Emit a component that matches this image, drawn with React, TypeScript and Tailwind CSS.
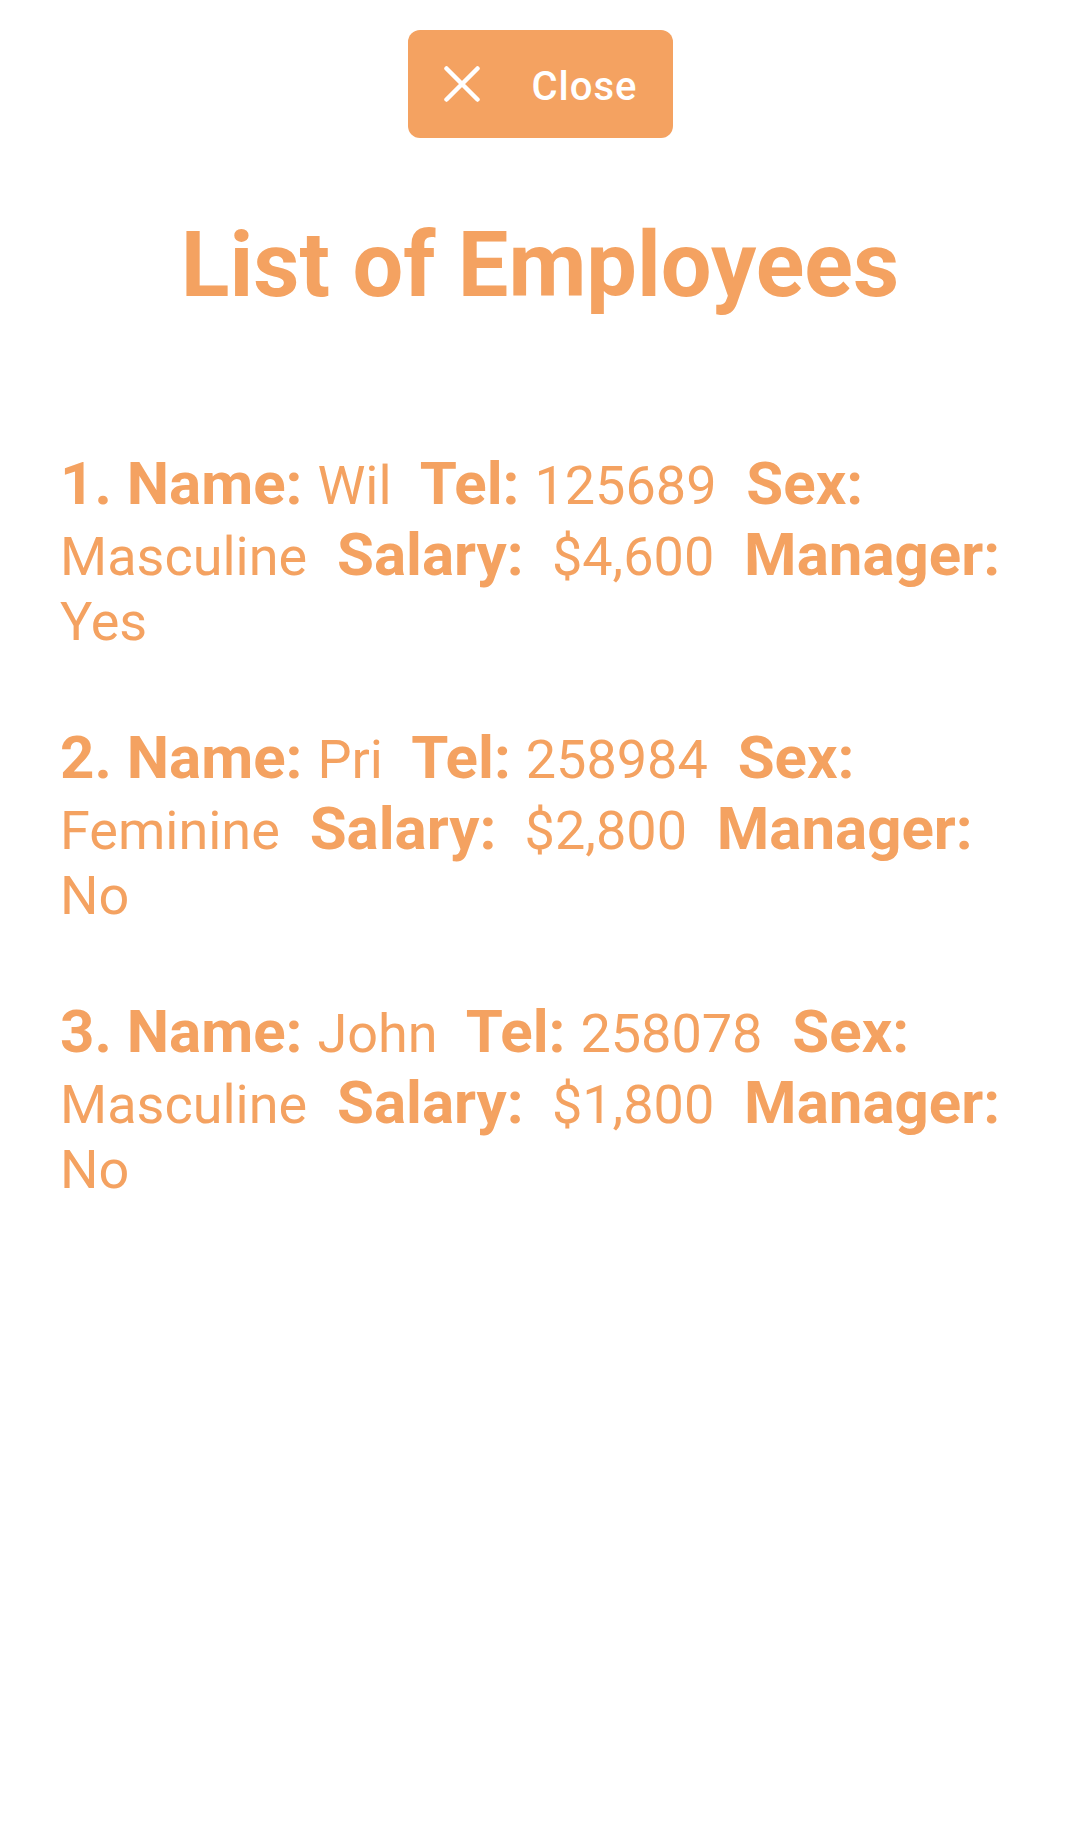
import React from 'react';

type Employee = {
  name: string;
  tel: string;
  sex: string;
  salary: string;
  manager: string;
};

const EMPLOYEES: Employee[] = [
  { name: 'Wil', tel: '125689', sex: 'Masculine', salary: '$4,600', manager: 'Yes' },
  { name: 'Pri', tel: '258984', sex: 'Feminine', salary: '$2,800', manager: 'No' },
  { name: 'John', tel: '258078', sex: 'Masculine', salary: '$1,800', manager: 'No' },
];

function Label({ children }: { children: React.ReactNode }) {
  return <span className="text-[60px] font-bold">{children}</span>;
}

// spaces sit inside the bold runs, like the original html string
function EmployeeRow({ index, employee }: { index: number; employee: Employee }) {
  return (
    <p className="whitespace-pre-wrap text-[54px] leading-[normal]">
      <Label>{`${index}. Name: `}</Label>
      {employee.name}
      <Label>{'  Tel: '}</Label>
      {employee.tel}
      <Label>{'  Sex: '}</Label>
      {employee.sex}
      <Label>{'  Salary: '}</Label>
      {' ' + employee.salary}
      <Label>{'  Manager: '}</Label>
      {employee.manager}
    </p>
  );
}

export default function App() {
  return (
    <div className="min-h-screen bg-white font-['Roboto',sans-serif] text-[#F4A261]">
      <div className="flex flex-col items-center pt-[30px]">
        <button className="flex h-[108px] w-[265px] items-center gap-[52px] rounded-xl bg-[#F4A261] pl-[36px] text-white">
          <svg width="36" height="36" viewBox="0 0 36 36" fill="none">
            <path d="M2.5 2.5L33.5 33.5M33.5 2.5L2.5 33.5" stroke="currentColor" strokeWidth="4.5" strokeLinecap="round" />
          </svg>
          <span className="mt-[6px] text-[40px] font-medium leading-none tracking-[1px]">Close</span>
        </button>

        <h1 className="mt-[75px] text-[90px] font-bold leading-[normal]">List of Employees</h1>
      </div>

      <div className="mt-[130px] flex flex-col gap-[69px] px-[60px]">
        {EMPLOYEES.map((e, i) => (
          <EmployeeRow key={e.tel} index={i + 1} employee={e} />
        ))}
      </div>
    </div>
  );
}
